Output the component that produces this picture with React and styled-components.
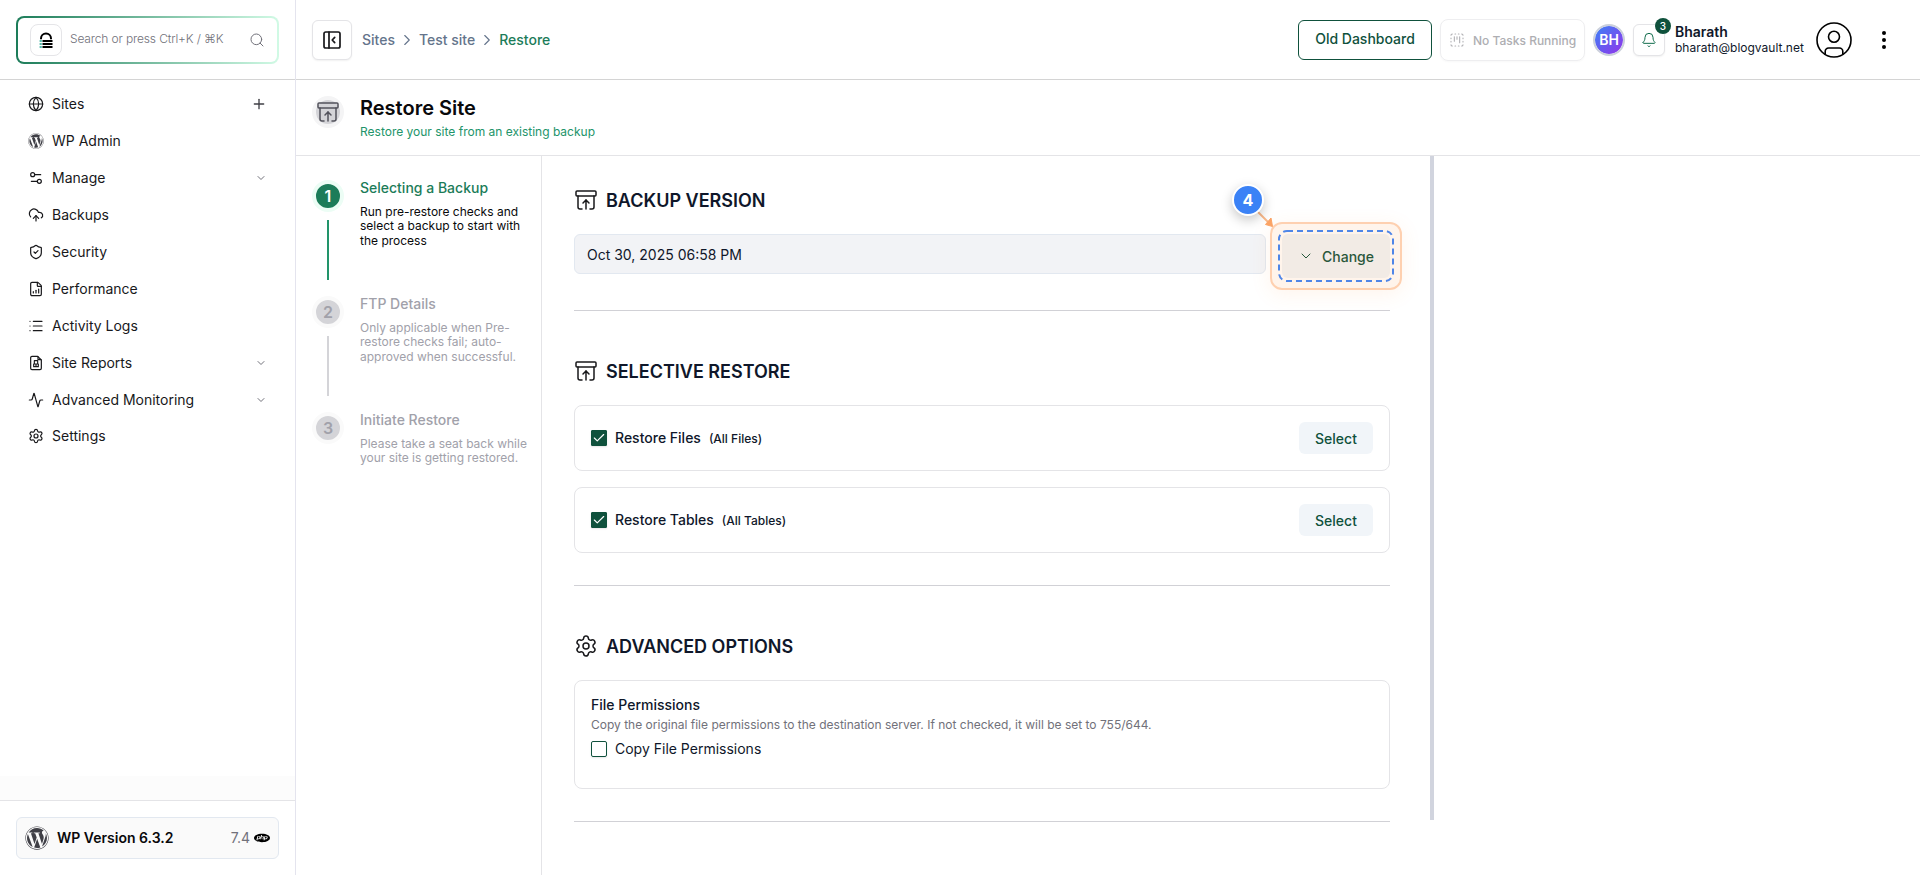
import React from "react";
import styled, { createGlobalStyle, css } from "styled-components";
import {
  Globe, Settings2, CloudUpload, ShieldCheck, FileChartColumnIncreasing, List, Activity,
  Settings, Plus, ChevronDown, ChevronRight, Search, Bell, ArchiveRestore, Check,
  SquareDashedKanban,
} from "lucide-react";
import { FaWordpress } from "react-icons/fa";
import { SiPhp } from "react-icons/si";

const GlobalStyle = createGlobalStyle`
  *, *::before, *::after { box-sizing: border-box; }
  body {
    margin: 0;
    background: #fff;
    color: #09090b;
    font-family: Inter, "Liberation Sans", sans-serif;
    font-size: 14px;
    line-height: 20px;
  }
  svg { display: block; flex-shrink: 0; }
  button { font: inherit; }
`;

const Page = styled.div`
  display: flex;
  height: 875px;
  overflow: hidden;
`;

/* Sidebar */
const Sidebar = styled.aside`
  display: flex;
  flex-direction: column;
  width: 296px;
  flex-shrink: 0;
  border-right: 1px solid #e4e4ee;
`;
const SearchArea = styled.div`
  height: 80px;
  padding: 16px;
  border-bottom: 1px solid #d4d4d4;
`;
const SearchBox = styled.div`
  display: flex;
  align-items: center;
  width: 263px;
  height: 48px;
  padding: 0 12px;
  border: 2px solid transparent;
  border-radius: 8px;
  background:
    linear-gradient(#fff, #fff) padding-box,
    linear-gradient(90deg, #1c7c59, #d1fae5) border-box;
  color: #71717a;
`;
const LogoTile = styled.span`
  display: grid;
  place-items: center;
  width: 32px;
  height: 32px;
  border: 1px solid #e5e5e8;
  border-radius: 8px;
`;
const SearchText = styled.span`
  flex: 1;
  margin: -2px 0 0 8px;
  font-size: 12px;
  font-weight: 300;
  letter-spacing: -0.14px;
  white-space: nowrap;
`;
const Nav = styled.nav`
  display: flex;
  flex-direction: column;
  gap: 1px;
  flex: 1;
  padding: 6px 28px 0;
`;
const NavItem = styled.a`
  display: flex;
  align-items: center;
  gap: 8px;
  height: 36px;
  margin-top: ${(p) => (p.$last ? -1 : 0)}px;
  color: #18181b;
`;
const NavLabel = styled.span`
  flex: 1;
`;
const NavEnd = styled.span`
  color: ${(p) => (p.$plus ? "#3f3f46" : "#71717a")};
`;
const FooterShade = styled.div`
  height: 24px;
  background: #fcfcfc;
`;
const SidebarFooter = styled.div`
  height: 75px;
  padding: 16px;
  border-top: 1px solid #e4e4e7;
`;
const VersionCard = styled.div`
  display: flex;
  align-items: center;
  width: 263px;
  height: 42px;
  padding: 0 8px;
  border: 1px solid #e2e8f0;
  border-radius: 6px;
  background: #fafafa;
  color: #3f3f46;
`;
const VersionName = styled.span`
  flex: 1;
  margin-left: 8px;
  font-weight: 600;
  color: #09090b;
`;
const PhpVersion = styled.span`
  display: flex;
  align-items: center;
  gap: 4px;
  color: #71717a;
  svg { color: #000; }
`;

/* Top bar */
const Main = styled.div`
  display: flex;
  flex-direction: column;
  flex: 1;
  min-width: 0;
`;
const TopBar = styled.header`
  display: flex;
  align-items: center;
  height: 80px;
  flex-shrink: 0;
  padding: 0 34px 0 16px;
  border-bottom: 1px solid #d4d4d4;
`;
const IconButton = styled.button`
  display: grid;
  place-items: center;
  position: relative;
  width: ${(p) => p.$size}px;
  height: ${(p) => p.$size}px;
  padding: 0;
  border: 1px solid #e4e4e7;
  border-radius: 6px;
  background: #fff;
  box-shadow: 0 1px 2px rgba(0, 0, 0, 0.06);
  color: ${(p) => p.$color};
`;
const Breadcrumbs = styled.div`
  display: flex;
  align-items: center;
  gap: 3px;
  flex: 1;
  margin-left: 10px;
  color: #64748b;
  font-weight: 500;
`;
const Crumb = styled.span`
  color: ${(p) => (p.$current ? "#1c7c59" : "#64748b")};
`;
const OutlineButton = styled.button`
  width: 134px;
  height: 40px;
  padding: 0 0 2px;
  border: 1px solid #0f513c;
  border-radius: 6px;
  background: #fff;
  color: #0f513c;
  font-weight: 500;
`;
const TaskStatus = styled.div`
  display: flex;
  align-items: center;
  gap: 8px;
  width: 145px;
  height: 42px;
  margin-left: 8px;
  padding-left: 8px;
  border: 1px solid #eeeef0;
  border-radius: 8px;
  box-shadow: 0 1px 2px rgba(0, 0, 0, 0.03);
  color: #aeaeb2;
  font-size: 12px;
  font-weight: 500;
  white-space: nowrap;
  span { padding-top: 2px; }
`;
const Initials = styled.span`
  display: grid;
  place-items: center;
  width: 32px;
  height: 32px;
  margin: 0 8px;
  border: 2px solid #cbd0dc;
  border-radius: 50%;
  background: linear-gradient(135deg, #3b82f6, #9333ea) padding-box;
  color: #fff;
  font-weight: 600;
`;
const Count = styled.span`
  position: absolute;
  top: -7px;
  right: -7px;
  width: 16px;
  height: 16px;
  border-radius: 50%;
  background: #0f513c;
  color: #fff;
  font-size: 10px;
  line-height: 16px;
  font-weight: 500;
  text-align: center;
`;
const Account = styled.div`
  width: 131px;
  margin: 0 10px;
  color: #0f172a;
  font-size: 12px;
  line-height: 16px;
  strong {
    display: block;
    font-size: 14px;
    font-weight: 600;
  }
`;
const MenuDots = styled.div`
  display: flex;
  flex-direction: column;
  gap: 3px;
  margin-left: 30px;
  i { width: 4px; height: 4px; border-radius: 50%; background: #000; }
`;

/* Page heading */
const PageHeader = styled.div`
  display: flex;
  gap: 16px;
  height: 76px;
  flex-shrink: 0;
  padding: 16px 16px 0;
  border-bottom: 1px solid #e4e4e7;
`;
const HeaderBadge = styled.span`
  display: grid;
  place-items: center;
  width: 32px;
  height: 32px;
  border: 4px solid #f4f4f5;
  border-radius: 50%;
  background: #d4d4d8;
  color: #52525b;
`;
const Title = styled.h1`
  margin: -2px 0 0;
  font-size: 20px;
  line-height: 28px;
  font-weight: 600;
`;
const Subtitle = styled.p`
  margin: 2px 0 0;
  color: #22946a;
  font-size: 12px;
  line-height: 16px;
`;

/* Steps */
const Body = styled.div`
  display: flex;
  flex: 1;
`;
const Steps = styled.ol`
  width: 246px;
  margin: 0;
  padding: 24px 0 0 16px;
  list-style: none;
  border-right: 1px solid #e4e4e7;
`;
const Step = styled.li`
  display: flex;
  gap: 16px;
  height: 116px;
`;
const StepTrack = styled.div`
  display: flex;
  flex-direction: column;
  align-items: center;
  gap: 8px;
  width: 32px;
`;
const StepNumber = styled.span`
  display: grid;
  place-items: center;
  width: 32px;
  height: 32px;
  border: 4px solid ${(p) => (p.$active ? "#ecfdf5" : "#fafafa")};
  border-radius: 50%;
  background: ${(p) => (p.$active ? "#1c7c59" : "#d4d4d8")};
  color: ${(p) => (p.$active ? "#fff" : "#a1a1aa")};
  font-size: 16px;
  font-weight: 600;
`;
const StepLine = styled.span`
  width: 2px;
  height: 60px;
  background: ${(p) => (p.$active ? "#22946a" : "#d4d4d8")};
`;
const StepText = styled.div`
  width: 176px;
  padding-top: 1px;
  color: ${(p) => (p.$active ? "#09090b" : "#a1a1aa")};
  font-size: 12px;
  line-height: 14.4px;
  h3 {
    margin: 0 0 10px;
    font-size: 14px;
    line-height: 14px;
    font-weight: 500;
    color: ${(p) => (p.$active ? "#1c7c59" : "#a1a1aa")};
  }
`;

/* Form */
const Form = styled.main`
  width: 892px;
  height: 664px;
  padding: 32px 40px 0 32px;
  border-right: 4px solid #d1d4de;
`;
const Section = styled.section`
  padding-bottom: 32px;
  margin-bottom: ${(p) => (p.$flush ? 0 : 48)}px;
  border-bottom: 1px solid #d1d1d6;
`;
const SectionTitle = styled.h2`
  display: flex;
  align-items: center;
  gap: 8px;
  height: 24px;
  margin: 0 0 22px;
  color: #0f172a;
  font-size: 18px;
  line-height: 24px;
  font-weight: 600;
  svg { color: #18181b; }
  span { padding-top: 2px; }
`;
const VersionRow = styled.div`
  display: flex;
  align-items: flex-start;
  gap: 16px;
`;
const VersionField = styled.div`
  flex: 1;
  height: 40px;
  padding: 10px 12px;
  border: 1px solid #e2e8f0;
  border-radius: 6px;
  background: #f2f3f6;
  color: #0f172a;
`;
const softButton = css`
  border: 0;
  border-radius: 6px;
  background: #f1f5f9;
  color: #0f513c;
  font-weight: 500;
`;
const ChangeWrap = styled.div`
  position: relative;
`;
const ChangeButton = styled.button`
  ${softButton}
  display: flex;
  align-items: center;
  justify-content: center;
  gap: 8px;
  width: 108px;
  height: 44px;
  padding: 2px 0 0;
  svg { margin: -2px 0 0; }
`;
const Highlight = styled.div`
  position: absolute;
  inset: -12px;
  border: 2px solid #fed0b0;
  border-radius: 12px;
  background: rgba(251, 146, 60, 0.1);
  box-shadow: 0 4px 20px rgba(251, 146, 60, 0.1);
`;
const DashedOutline = styled.svg`
  position: absolute;
  top: -4px;
  left: -4px;
`;
const Arrow = styled.svg`
  position: absolute;
  top: -26px;
  left: -28px;
`;
const Marker = styled.span`
  position: absolute;
  top: -50px;
  left: -50px;
  display: grid;
  place-items: center;
  width: 32px;
  height: 32px;
  border: 2px solid #fff;
  border-radius: 50%;
  background: #3b82f6;
  box-shadow: 0 4px 12px rgba(0, 0, 0, 0.22);
  color: #fff;
  font-size: 16px;
  font-weight: 700;
`;
const Cards = styled.div`
  display: grid;
  gap: 16px;
`;
const Card = styled.div`
  border: 1px solid #e4e4e7;
  border-radius: 8px;
  color: #0f172a;
`;
const OptionCard = styled(Card)`
  display: flex;
  align-items: center;
  height: 66px;
  padding: 0 16px;
`;
const Checkbox = styled.span`
  display: grid;
  place-items: center;
  width: 16px;
  height: 16px;
  flex-shrink: 0;
  border: 1px solid #0f513c;
  border-radius: ${(p) => (p.$checked ? 1 : 2)}px;
  background: ${(p) => (p.$checked ? "#0f513c" : "#fff")};
  box-shadow: 0 1px 2px rgba(0, 0, 0, 0.1);
  color: #fff;
`;
const OptionLabel = styled.span`
  margin-left: 8px;
  font-weight: 500;
`;
const OptionNote = styled.span`
  flex: 1;
  margin: 1px 0 0 8px;
  font-size: 12px;
  font-weight: 500;
`;
const SelectButton = styled.button`
  ${softButton}
  width: 74px;
  height: 32px;
  padding: 2px 0 0;
`;
const PermissionCard = styled(Card)`
  height: 109px;
  padding: 14px 16px;
  h4 { margin: 0; font-size: 14px; line-height: 20px; font-weight: 500; }
  p { margin: 2px 0 6px; color: #71717a; font-size: 12px; line-height: 16px; }
`;
const CheckRow = styled.div`
  display: flex;
  align-items: center;
  gap: 8px;
  height: 20px;
`;

const VaultLogo = () => (
  <svg width="14" height="16" viewBox="0 0 14 16">
    <path d="M2 7.2V6.6a5 5 0 0 1 10 0v.6" fill="none" stroke="#000" strokeWidth="2" />
    <path d="M3.5 9H13.5M3.5 12H13.5M3.5 15H13.5" stroke="#000" strokeWidth="1.9" />
    <path d="M.6 9h2.2M.6 12h2.2M.6 15h2.2" stroke="#1fa491" strokeWidth="1.4" />
  </svg>
);

const ReportIcon = () => (
  <svg width="16" height="16" viewBox="0 0 24 24" fill="none" stroke="currentColor" strokeWidth="1.8" strokeLinejoin="round">
    <path d="M14.5 2H6a2 2 0 0 0-2 2v16a2 2 0 0 0 2 2h12a2 2 0 0 0 2-2V7.5L14.5 2Z" />
    <path d="M15 2v5h5" />
    <path d="M9.5 8.5h5v5h-5zM8.5 13.5h7v4h-7zM12 13.5v4" strokeWidth="1.7" />
  </svg>
);

const PanelIcon = () => (
  <svg width="20" height="20" viewBox="0 0 20 20" fill="none" stroke="currentColor" strokeWidth="1.7" strokeLinecap="round" strokeLinejoin="round">
    <rect x="2" y="2" width="16" height="16" rx="1.8" />
    <path d="M7 2v16M12.7 7.3 10.2 10l2.5 2.7" />
  </svg>
);

const UserIcon = () => (
  <svg width="36" height="36" viewBox="0 0 36 36" fill="none" stroke="#000" strokeWidth="1.6">
    <circle cx="18" cy="18" r="17" />
    <circle cx="18" cy="14.7" r="5.5" />
    <path d="M9.2 32.4V29.4a3.4 3.4 0 0 1 3.4-3.4h10.8a3.4 3.4 0 0 1 3.4 3.4v3" />
  </svg>
);

const NAV = [
  { label: "Sites", Icon: Globe, end: "plus" },
  { label: "WP Admin", Icon: FaWordpress, glyph: true },
  { label: "Manage", Icon: Settings2, end: "chevron" },
  { label: "Backups", Icon: CloudUpload },
  { label: "Security", Icon: ShieldCheck },
  { label: "Performance", Icon: FileChartColumnIncreasing },
  { label: "Activity Logs", Icon: List },
  { label: "Site Reports", Icon: ReportIcon, end: "chevron" },
  { label: "Advanced Monitoring", Icon: Activity, end: "chevron" },
  { label: "Settings", Icon: Settings },
];

const STEPS = [
  { title: "Selecting a Backup", text: "Run pre-restore checks and select a backup to start with the process", active: true },
  { title: "FTP Details", text: "Only applicable when Pre-restore checks fail; auto-approved when successful." },
  { title: "Initiate Restore", text: "Please take a seat back while your site is getting restored." },
];

const OPTIONS = [
  { label: "Restore Files", note: "(All Files)" },
  { label: "Restore Tables", note: "(All Tables)" },
];

export default function App() {
  return (
    <>
      <GlobalStyle />
      <Page>
        <Sidebar>
          <SearchArea>
            <SearchBox>
              <LogoTile><VaultLogo /></LogoTile>
              <SearchText>Search or press Ctrl+K / ⌘K</SearchText>
              <Search size={16} strokeWidth={1.5} />
            </SearchBox>
          </SearchArea>
          <Nav>
            {NAV.map(({ label, Icon, end, glyph }, i) => (
              <NavItem key={label} $last={i === NAV.length - 1}>
                {glyph ? <Icon size={16} color="#3f3f46" /> : <Icon size={16} strokeWidth={1.8} />}
                <NavLabel>{label}</NavLabel>
                {end && (
                  <NavEnd $plus={end === "plus"}>
                    {end === "plus" ? <Plus size={16} /> : <ChevronDown size={12} />}
                  </NavEnd>
                )}
              </NavItem>
            ))}
          </Nav>
          <FooterShade />
          <SidebarFooter>
            <VersionCard>
              <FaWordpress size={24} />
              <VersionName>WP Version 6.3.2</VersionName>
              <PhpVersion>7.4 <SiPhp size={16} /></PhpVersion>
            </VersionCard>
          </SidebarFooter>
        </Sidebar>

        <Main>
          <TopBar>
            <IconButton $size={40} $color="#18181b"><PanelIcon /></IconButton>
            <Breadcrumbs>
              <Crumb>Sites</Crumb>
              <ChevronRight size={18} strokeWidth={1.5} />
              <Crumb>Test site</Crumb>
              <ChevronRight size={18} strokeWidth={1.5} />
              <Crumb $current>Restore</Crumb>
            </Breadcrumbs>
            <OutlineButton>Old Dashboard</OutlineButton>
            <TaskStatus>
              <SquareDashedKanban size={16} strokeWidth={1.6} />
              <span>No Tasks Running</span>
            </TaskStatus>
            <Initials>BH</Initials>
            <IconButton $size={32} $color="#0f6b4b">
              <Bell size={16} strokeWidth={1.5} />
              <Count>3</Count>
            </IconButton>
            <Account>
              <strong>Bharath</strong>
              bharath@blogvault.net
            </Account>
            <UserIcon />
            <MenuDots><i /><i /><i /></MenuDots>
          </TopBar>

          <PageHeader>
            <HeaderBadge><ArchiveRestore size={24} strokeWidth={1.5} /></HeaderBadge>
            <div>
              <Title>Restore Site</Title>
              <Subtitle>Restore your site from an existing backup</Subtitle>
            </div>
          </PageHeader>

          <Body>
            <Steps>
              {STEPS.map(({ title, text, active }, i) => (
                <Step key={title}>
                  <StepTrack>
                    <StepNumber $active={active}>{i + 1}</StepNumber>
                    {i < STEPS.length - 1 && <StepLine $active={active} />}
                  </StepTrack>
                  <StepText $active={active}>
                    <h3>{title}</h3>
                    {text}
                  </StepText>
                </Step>
              ))}
            </Steps>

            <Form>
              <Section>
                <SectionTitle><ArchiveRestore strokeWidth={1.5} /><span>BACKUP VERSION</span></SectionTitle>
                <VersionRow>
                  <VersionField>Oct 30, 2025 06:58 PM</VersionField>
                  <ChangeWrap>
                    <ChangeButton>
                      <ChevronDown size={16} strokeWidth={1.5} />
                      Change
                    </ChangeButton>
                    <Highlight />
                    <DashedOutline width="116" height="52" fill="none">
                      <rect x="1" y="1" width="114" height="50" rx="8" stroke="#4f86e8" strokeWidth="2" strokeDasharray="6 4" />
                    </DashedOutline>
                    <Arrow width="24" height="20">
                      <path d="M1 1 14 14" stroke="#f9b98a" strokeWidth="2" />
                      <path d="M18.5 18.5 11.5 16.5 17 10z" fill="#fba365" stroke="#fba365" />
                    </Arrow>
                    <Marker>4</Marker>
                  </ChangeWrap>
                </VersionRow>
              </Section>

              <Section>
                <SectionTitle><ArchiveRestore strokeWidth={1.5} /><span>SELECTIVE RESTORE</span></SectionTitle>
                <Cards>
                  {OPTIONS.map(({ label, note }) => (
                    <OptionCard key={label}>
                      <Checkbox $checked><Check size={14} strokeWidth={2} /></Checkbox>
                      <OptionLabel>{label}</OptionLabel>
                      <OptionNote>{note}</OptionNote>
                      <SelectButton>Select</SelectButton>
                    </OptionCard>
                  ))}
                </Cards>
              </Section>

              <Section $flush>
                <SectionTitle><Settings strokeWidth={1.5} /><span>ADVANCED OPTIONS</span></SectionTitle>
                <PermissionCard>
                  <h4>File Permissions</h4>
                  <p>Copy the original file permissions to the destination server. If not checked, it will be set to 755/644.</p>
                  <CheckRow>
                    <Checkbox />
                    Copy File Permissions
                  </CheckRow>
                </PermissionCard>
              </Section>
            </Form>
          </Body>
        </Main>
      </Page>
    </>
  );
}
